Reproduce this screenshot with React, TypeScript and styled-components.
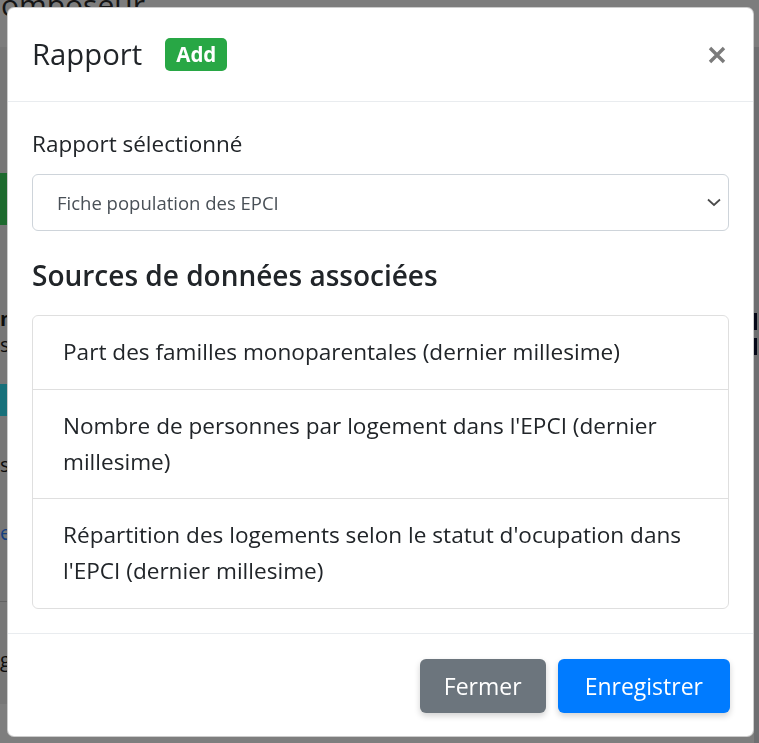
import React from "react";
import styled, { createGlobalStyle } from "styled-components";

const GlobalStyle = createGlobalStyle`
  html, body { margin: 0; padding: 0; }
  body {
    font-family: "Open Sans", "Noto Sans", "Liberation Sans", sans-serif;
    overflow: hidden;
    background: #eeeeee;
  }
  * { box-sizing: border-box; }
`;

/* ---------- background page (dimmed by the backdrop) ---------- */

const BgPage = styled.div`
  height: 743px;
  display: flex;
  flex-direction: column;
  background: #eeeeee;
`;

const BgTopBar = styled.div`
  height: 47px;
  flex: 0 0 47px;
  background: #fafafa;
  overflow: hidden;
`;

const BgBrand = styled.div`
  font-size: 30px;
  line-height: 30px;
  color: #2a2a2a;
  margin: -10px 0 0 -18px;
  white-space: nowrap;
`;

const BgMain = styled.div`
  flex: 1;
  display: flex;
  min-height: 0;
`;

const BgLeft = styled.div`
  flex: 0 0 754px;
  display: flex;
  flex-direction: column;
  overflow: hidden;
`;

const BgRight = styled.div`
  flex: 1;
  background: #dcdfe2;
  display: flex;
  flex-direction: column;
  overflow: hidden;
`;

const BgButton = styled.div<{ $bg: string; $top: number; $h: number }>`
  margin-top: ${(p) => p.$top}px;
  height: ${(p) => p.$h}px;
  width: 160px;
  background: ${(p) => p.$bg};
`;

const BgText = styled.div<{ $top: number; $color?: string; $bold?: boolean }>`
  margin-top: ${(p) => p.$top}px;
  font-size: 20px;
  line-height: 20px;
  color: ${(p) => p.$color || "#1a1a1a"};
  font-weight: ${(p) => (p.$bold ? 700 : 400)};
  white-space: nowrap;
`;

const BgBar = styled.div<{ $top: number }>`
  margin-top: ${(p) => p.$top}px;
  width: 3px;
  height: 17px;
  background: #0a1030;
`;

const BgRule = styled.div<{ $top: number }>`
  margin-top: ${(p) => p.$top}px;
  height: 1px;
  background: #c4c4c4;
`;

const BgBand = styled.div<{ $top: number }>`
  margin-top: ${(p) => p.$top}px;
  flex: 1;
  background: #fdfdfd;
`;

const Backdrop = styled.div`
  position: fixed;
  inset: 0;
  background: rgba(0, 0, 0, 0.5);
`;

/* ---------- modal ---------- */

const ModalLayer = styled.div`
  position: fixed;
  inset: 0;
  padding: 7px 0 0 7px;
`;

const Dialog = styled.div`
  width: 747px;
  background: #fff;
  border: 1px solid rgba(0, 0, 0, 0.2);
  border-radius: 7px;
  display: flex;
  flex-direction: column;
  color: #212529;
`;

const Header = styled.div`
  display: flex;
  align-items: center;
  padding: 24px 27px 24px 24px;
  border-bottom: 1px solid #e9ecef;
`;

const Title = styled.h5`
  margin: 0;
  font-size: 29.3px;
  line-height: 45px;
  font-weight: 500;
  display: flex;
  align-items: center;
`;

const Badge = styled.span`
  margin-left: 23px;
  height: 33px;
  padding: 0 11px;
  display: inline-flex;
  align-items: center;
  background: #28a745;
  color: #fff;
  font-size: 20.5px;
  font-weight: 700;
  border-radius: 5px;
`;

const CloseButton = styled.button`
  margin-left: auto;
  width: 18px;
  height: 18px;
  padding: 0;
  border: 0;
  background: transparent;
  display: flex;
  cursor: pointer;
`;

const Body = styled.div`
  padding: 24px;
`;

const Label = styled.label`
  display: block;
  font-size: 22.5px;
  line-height: 36px;
  margin-bottom: 12px;
`;

const SelectWrap = styled.div`
  position: relative;
  margin-bottom: 22px;
`;

const Select = styled.select`
  width: 100%;
  height: 57px;
  appearance: none;
  -webkit-appearance: none;
  border: 1px solid #ced4da;
  border-radius: 6px;
  background: #fff;
  padding: 0 40px 0 24px;
  font-family: inherit;
  font-size: 18.5px;
  color: #495057;
`;

const Chevron = styled.svg`
  position: absolute;
  right: 8px;
  top: 24px;
  pointer-events: none;
`;

const SectionTitle = styled.h5`
  margin: 0 0 17px;
  font-size: 28px;
  line-height: 45px;
  font-weight: 600;
`;

const ListGroup = styled.ul`
  list-style: none;
  margin: 0;
  padding: 0;
  border: 1px solid rgba(0, 0, 0, 0.125);
  border-radius: 6px;
`;

const ListItem = styled.li`
  padding: 18px 30px 18.5px;
  font-size: 22.6px;
  line-height: 36px;
  & + & {
    border-top: 1px solid rgba(0, 0, 0, 0.125);
  }
`;

const Footer = styled.div`
  display: flex;
  justify-content: flex-end;
  gap: 12px;
  padding: 25px 23px 23px;
  border-top: 1px solid #e9ecef;
`;

const Button = styled.button<{ $variant: "secondary" | "primary" }>`
  height: 54px;
  padding: 0 ${(p) => (p.$variant === "primary" ? 27 : 24)}px;
  border: 0;
  border-radius: 6px;
  font-family: inherit;
  font-size: 23px;
  color: #fff;
  background: ${(p) => (p.$variant === "primary" ? "#007bff" : "#6c757d")};
  box-shadow: 0 3px 6px rgba(0, 0, 0, 0.18);
  cursor: pointer;
`;

const sources = [
  "Part des familles monoparentales (dernier millesime)",
  "Nombre de personnes par logement dans l'EPCI (dernier millesime)",
  "Répartition des logements selon le statut d'ocupation dans l'EPCI (dernier millesime)",
];

export default function App() {
  return (
    <>
      <GlobalStyle />
      <BgPage>
        <BgTopBar>
          <BgBrand>Composeur</BgBrand>
        </BgTopBar>
        <BgMain>
          <BgLeft>
            <BgButton $bg="#3ad45c" $top={126} $h={52} />
            <BgText $top={84} $bold>
              n
            </BgText>
            <BgText $top={6}>s</BgText>
            <BgButton $bg="#2ee0f4" $top={29} $h={32} />
            <BgText $top={39}>s</BgText>
            <BgText $top={48} $color="#2a7fff">
              e
            </BgText>
            <BgRule $top={58} />
            <BgText $top={48}>g</BgText>
            <BgBand $top={34} />
          </BgLeft>
          <BgRight>
            <BgBar $top={266} />
            <BgBar $top={8} />
          </BgRight>
        </BgMain>
      </BgPage>
      <Backdrop />
      <ModalLayer>
        <Dialog role="dialog">
          <Header>
            <Title>
              Rapport
              <Badge>Add</Badge>
            </Title>
            <CloseButton aria-label="Close">
              <svg width="18" height="18" viewBox="0 0 18 18">
                <path
                  d="M2 2 L16 16 M16 2 L2 16"
                  stroke="#7b7b7b"
                  strokeWidth="3.4"
                  strokeLinecap="butt"
                />
              </svg>
            </CloseButton>
          </Header>
          <Body>
            <Label htmlFor="rapport">Rapport sélectionné</Label>
            <SelectWrap>
              <Select id="rapport" defaultValue="epci">
                <option value="epci">Fiche population des EPCI</option>
              </Select>
              <Chevron width="14" height="9" viewBox="0 0 14 9">
                <polyline
                  points="1,1.5 7,7 13,1.5"
                  fill="none"
                  stroke="#4a4a4a"
                  strokeWidth="1.7"
                />
              </Chevron>
            </SelectWrap>
            <SectionTitle>Sources de données associées</SectionTitle>
            <ListGroup>
              {sources.map((s) => (
                <ListItem key={s}>{s}</ListItem>
              ))}
            </ListGroup>
          </Body>
          <Footer>
            <Button $variant="secondary">Fermer</Button>
            <Button $variant="primary">Enregistrer</Button>
          </Footer>
        </Dialog>
      </ModalLayer>
    </>
  );
}
